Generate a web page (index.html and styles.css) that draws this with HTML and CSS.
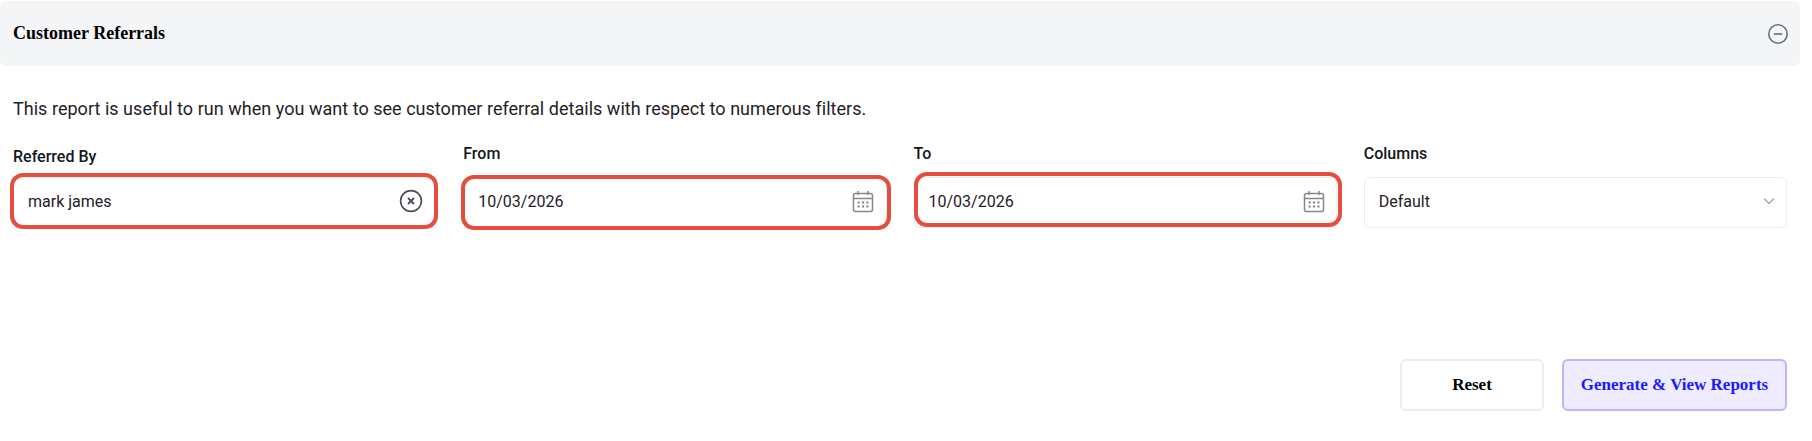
FILE: index.html
```html
<!DOCTYPE html>
<html lang="en">
<head>
  <meta charset="UTF-8">
  <meta name="viewport" content="width=device-width, initial-scale=1.0">
  <title>Customer Referrals</title>
  <link rel="stylesheet" href="styles.css">
</head>
<body>

<div class="page">
  <header class="panel-head">
    <h2>Customer Referrals</h2>
    <svg class="icon" width="22" height="22" viewBox="0 0 22 22" fill="none" stroke="#6b6f76" stroke-width="1.6">
      <circle cx="11" cy="11" r="9.2"/>
      <path d="M6.8 11h8.4"/>
    </svg>
  </header>

  <p class="intro">This report is useful to run when you want to see customer referral details with respect to numerous filters.</p>

  <div class="filters">
    <div class="field field-referred">
      <label>Referred By</label>
      <div class="control">
        <span>mark james</span>
        <svg class="icon" width="24" height="24" viewBox="0 0 24 24" fill="none" stroke="#4a4e57" stroke-width="1.6">
          <circle cx="12" cy="12" r="10.4"/>
          <path d="M9 9l6 6M15 9l-6 6" stroke-width="1.9"/>
        </svg>
      </div>
    </div>

    <div class="field field-from">
      <label>From</label>
      <div class="control">
        <span>10/03/2026</span>
        <svg class="icon" width="22" height="23" viewBox="0 0 22 23" fill="none" stroke="#85888d" stroke-width="1.5">
          <rect x="1.5" y="3.5" width="19" height="18" rx="2"/>
          <path d="M1.5 8.5h19M6 1v4M16 1v4"/>
          <path d="M5.5 12.5h2.2M9.9 12.5h2.2M14.3 12.5h2.2M5.5 16.5h2.2M9.9 16.5h2.2M14.3 16.5h2.2" stroke-width="2.2"/>
        </svg>
      </div>
    </div>

    <div class="field field-to">
      <label>To</label>
      <div class="control">
        <span>10/03/2026</span>
        <svg class="icon" width="22" height="23" viewBox="0 0 22 23" fill="none" stroke="#85888d" stroke-width="1.5">
          <rect x="1.5" y="3.5" width="19" height="18" rx="2"/>
          <path d="M1.5 8.5h19M6 1v4M16 1v4"/>
          <path d="M5.5 12.5h2.2M9.9 12.5h2.2M14.3 12.5h2.2M5.5 16.5h2.2M9.9 16.5h2.2M14.3 16.5h2.2" stroke-width="2.2"/>
        </svg>
      </div>
    </div>

    <div class="field field-columns">
      <label>Columns</label>
      <div class="control">
        <span>Default</span>
        <svg class="icon" width="12" height="8" viewBox="0 0 12 8" fill="none" stroke="#a3a6ab" stroke-width="1.4">
          <path d="M1 1.5l5 5 5-5"/>
        </svg>
      </div>
    </div>
  </div>

  <div class="actions">
    <button class="btn">Reset</button>
    <button class="btn btn-primary">Generate &amp; View Reports</button>
  </div>
</div>

</body>
</html>
```

FILE: styles.css
```css
:root {
  --panel-bg: #f4f5f7;
  --text-color: #1f2126;
  --border-color: #eceded;
  --mark-color: #e34f3c;
}
body {
  margin: 0;
  background-color: white;
  color: var(--text-color);
  font-family: 'Roboto', sans-serif;
}
.page {
  width: 1800px;
  padding-top: 1px;
}
.panel-head {
  height: 65px;
  padding: 0 13px;
  display: flex;
  align-items: center;
  justify-content: space-between;
  background-color: var(--panel-bg);
  border-radius: 6px;
  box-sizing: border-box;
}
.panel-head h2 {
  margin: 0;
  font-family: 'Liberation Serif', serif;
  font-size: 18px;
  font-weight: bold;
  color: black;
}
.panel-head .icon {
  margin-right: -2px;
}
.intro {
  margin: 32px 13px 0;
  font-size: 18px;
  line-height: 22px;
  letter-spacing: 0.03px;
}
.filters {
  margin: 24px 13px 0;
  display: grid;
  grid-template-columns: repeat(4, 1fr);
  gap: 27px;
}
.field {
  position: relative;
}
.field label {
  display: block;
  height: 20px;
  margin-bottom: 13px;
  font-size: 16px;
  font-weight: 500;
  line-height: 20px;
  color: #15171b;
}
.field-referred label {
  padding-top: 3px;
  margin-bottom: 10px;
}
.control {
  height: 51px;
  padding: 0 12px 3px 14px;
  display: flex;
  align-items: center;
  justify-content: space-between;
  border: 1px solid var(--border-color);
  border-radius: 6px;
  font-size: 16px;
  box-sizing: border-box;
}
.field-to .icon,
.field-columns .icon {
  margin-right: -1px;
}
/* red marks drawn over the screenshot */
.field-referred .control::after,
.field-from .control::after,
.field-to .control::after {
  content: "";
  position: absolute;
  border: 4px solid var(--mark-color);
  border-radius: 13px;
  background: transparent;
  pointer-events: none;
}
.field-referred .control::after {
  left: -3px;
  right: -2px;
  top: 29px;
  height: 48px;
}
.field-from .control::after {
  left: -2px;
  right: -4px;
  top: 31px;
  height: 47px;
}
.field-to .control::after {
  left: 0;
  right: -5px;
  top: 28px;
  height: 47px;
}
.actions {
  margin: 131px 13px 0;
  display: flex;
  justify-content: flex-end;
  gap: 18px;
}
.btn {
  height: 52px;
  width: 144px;
  background-color: white;
  border: 2px solid var(--border-color);
  border-radius: 6px;
  font-family: 'Liberation Serif', serif;
  font-size: 17px;
  font-weight: bold;
  color: black;
}
.btn-primary {
  width: 225px;
  background-color: #eeecfe;
  border-color: #b9b7fd;
  color: #1a1aff;
}
```
